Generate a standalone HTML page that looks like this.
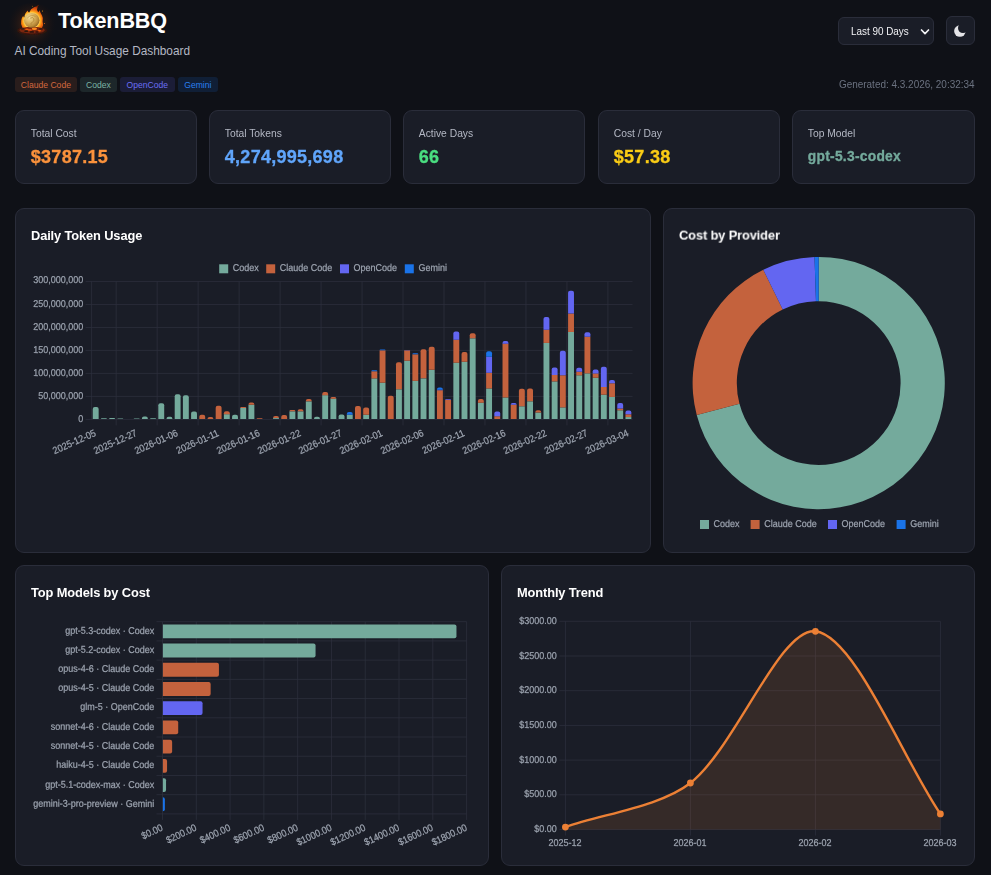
<!DOCTYPE html>
<html lang="en"><head><meta charset="utf-8"><title>TokenBBQ</title>
<style>
*{box-sizing:border-box;margin:0;padding:0}
html,body{width:991px;height:875px;overflow:hidden;background:#0f1117;font-family:"Liberation Sans",sans-serif;color:#e4e4e7}
#main{position:absolute;left:0;top:0;width:991px;height:875px;will-change:transform}
.abs,.card,.logo,h1,.sub,.tag,.gen,.sel,.moon,h2{position:absolute}
h1{left:58px;top:8.6px;font-size:21.6px;font-weight:700;color:#fff;letter-spacing:-.12px;line-height:24px;white-space:nowrap}
.sub{left:14.5px;top:43.5px;font-size:11.85px;color:#b4b8c4;line-height:14px;white-space:nowrap}
.tag{top:77px;height:14.6px;border-radius:3px;font-size:8.6px;line-height:14.6px;text-align:center;white-space:nowrap}
.tag span{position:relative;top:1px}
.gen{right:16.5px;top:77.8px;font-size:10.7px;color:#6b7280;line-height:12px;white-space:nowrap;transform:scaleX(.932);transform-origin:100% 50%}
.sel{left:838px;top:17px;width:96px;height:28px;border:1px solid #2a2d3a;border-radius:6px;background:#1a1d27;color:#f1f1f4;white-space:nowrap}
.sel span{position:absolute;left:12.4px;top:0;font-size:11.3px;line-height:27px;transform:scaleX(.875);transform-origin:0 50%}
.moon{left:946px;top:16px;width:29px;height:29px;border:1px solid #2a2d3a;border-radius:6px;background:#1a1d27}
.card{background:#1a1d27;border:1px solid #2a2d3a;border-radius:9px}
.stat{top:110px;height:74px}
.sl{position:absolute;left:14.8px;top:16px;font-size:10.3px;color:#b4b8c4;line-height:13px;white-space:nowrap}
.sv{position:absolute;left:14.8px;top:35px;font-weight:700;line-height:22px;white-space:nowrap;letter-spacing:.27px;-webkit-text-stroke:.3px currentColor}
h2{font-size:13.1px;font-weight:700;color:#fff;line-height:16px;white-space:nowrap;letter-spacing:-.12px;transform:scale(.98,1.03);transform-origin:0 12.5px}
svg.ch{position:absolute;left:0;top:0}
.g{stroke:#2d303e;stroke-width:.75}
.t{font-family:"Liberation Sans",sans-serif;font-size:9px;fill:#9ca3af;stroke:#9ca3af;stroke-width:.22px}
</style></head><body>

<svg class="logo" width="60" height="46" viewBox="0 0 60 46" style="left:0;top:0">
<defs>
<radialGradient id="glow" cx="32" cy="24" r="24" gradientUnits="userSpaceOnUse"><stop offset="0" stop-color="#6a3010" stop-opacity=".7"/><stop offset=".5" stop-color="#4a2412" stop-opacity=".42"/><stop offset="1" stop-color="#20120e" stop-opacity="0"/></radialGradient>
<radialGradient id="coin" cx="29.5" cy="17.5" r="11" gradientUnits="userSpaceOnUse"><stop offset="0" stop-color="#f3dc9a"/><stop offset=".45" stop-color="#d9b35f"/><stop offset=".8" stop-color="#b98a3a"/><stop offset="1" stop-color="#8f6424"/></radialGradient>
<radialGradient id="fl" cx="31.7" cy="20.5" r="15" gradientUnits="userSpaceOnUse"><stop offset=".48" stop-color="#ffe07a"/><stop offset=".58" stop-color="#ffae1c"/><stop offset=".72" stop-color="#f06a10"/><stop offset=".9" stop-color="#c23c0a"/><stop offset="1" stop-color="#7a2407"/></radialGradient>
<filter id="bl" x="-20%" y="-20%" width="140%" height="140%"><feGaussianBlur stdDeviation=".35"/></filter>
</defs>
<ellipse cx="32" cy="25" rx="26" ry="22" fill="url(#glow)"/>
<g filter="url(#bl)">
<ellipse cx="32.1" cy="30.4" rx="14.8" ry="4.6" fill="#35140b"/>
<path d="M22.5 28Q20.3 24.5 21.2 20.8Q21.4 18 23.2 15.8Q23.4 17.6 24.4 17.4Q24.6 13.2 27.8 10.6Q27.9 12.6 29.2 12.4Q30.6 8.6 34 7.2Q36.6 6.4 38.9 4.7Q37 7.6 37 9.6Q37.4 11.6 38.6 12.2Q39 10.6 39.6 10.2Q40.6 13.2 42 15.4Q43.6 18.2 42.6 21.4Q43.8 24.6 42.2 27.6Q40 30.6 32 30.6Q25 30.6 22.5 28Z" fill="url(#fl)"/>
<ellipse cx="32.1" cy="30.2" rx="12.6" ry="3.4" fill="#7c260b"/>
<ellipse cx="34.4" cy="28.7" rx="2.6" ry="1.3" fill="#ff8a1f"/><ellipse cx="30" cy="29.9" rx="2" ry=".9" fill="#d9480f"/>
<ellipse cx="27" cy="29.4" rx="1.8" ry=".9" fill="#e8590c"/>
<ellipse cx="39.3" cy="30.8" rx="1.7" ry=".8" fill="#e8590c"/>
<ellipse cx="22.5" cy="28.8" rx="2" ry="1" fill="#3a1a12"/>
<ellipse cx="26.2" cy="31.2" rx="2" ry=".9" fill="#2c130d"/>
<ellipse cx="31.8" cy="31.9" rx="2.4" ry=".9" fill="#2c130d"/>
<ellipse cx="41" cy="28.9" rx="2" ry=".9" fill="#3a1a12"/>
<ellipse cx="37" cy="32" rx="1.8" ry=".8" fill="#2c130d"/>
<ellipse cx="31.7" cy="20.3" rx="7.8" ry="7.4" fill="url(#coin)"/>
<path d="M27.2 18.2Q31 13.8 35.6 16.6" fill="none" stroke="#a77a2e" stroke-width=".7" opacity=".7"/>
<path d="M30.2 18.2q2.6-1.6 3.6.6t-1.4 3.4-1.2 2.4" fill="none" stroke="#a77a2e" stroke-width=".9" opacity=".75"/>
</g>
<circle cx="42.4" cy="11" r=".55" fill="#f59e0b"/><circle cx="44.4" cy="23.4" r=".5" fill="#f97316"/><circle cx="32.6" cy="6.2" r=".45" fill="#f59e0b" opacity=".8"/>
</svg>
<h1>TokenBBQ</h1>
<div class="sub">AI Coding Tool Usage Dashboard</div>
<div class="tag" style="left:15.1px;width:61.6px;color:#d2683f;background:rgba(196,98,61,.15)"><span>Claude Code</span></div>
<div class="tag" style="left:80.2px;width:36.6px;color:#7bb4a5;background:rgba(116,170,156,.15)"><span>Codex</span></div>
<div class="tag" style="left:120px;width:54.6px;color:#6a6df5;background:rgba(99,102,241,.15)"><span>OpenCode</span></div>
<div class="tag" style="left:178px;width:39.7px;color:#2a7ff0;background:rgba(26,115,232,.15)"><span>Gemini</span></div>
<div class="sel"><span>Last 90 Days</span><svg width="10" height="8" viewBox="0 0 10 8" style="position:absolute;left:81px;top:9.5px"><path d="M1.5 2l3.5 3.6L8.5 2" fill="none" stroke="#f1f1f4" stroke-width="1.7" stroke-linecap="round" stroke-linejoin="round"/></svg></div>
<div class="moon"><svg width="16" height="16" viewBox="0 0 16 16" style="position:absolute;left:5.2px;top:5.8px"><defs><mask id="mm"><rect width="16" height="16" fill="#000"/><circle cx="7.9" cy="8.1" r="5.75" fill="#fff"/><circle cx="11" cy="5.1" r="5" fill="#000"/></mask></defs><rect width="16" height="16" fill="#e4e4e7" mask="url(#mm)"/></svg></div>
<div class="gen">Generated: 4.3.2026, 20:32:34</div>
<div id="main">
<div class="card stat" style="left:15px;width:182px"><div class="sl">Total Cost</div><div class="sv" style="color:#fb923c;font-size:18px">$3787.15</div></div><div class="card stat" style="left:209px;width:182px"><div class="sl">Total Tokens</div><div class="sv" style="color:#60a5fa;font-size:18px">4,274,995,698</div></div><div class="card stat" style="left:403px;width:182px"><div class="sl">Active Days</div><div class="sv" style="color:#4ade80;font-size:18px">66</div></div><div class="card stat" style="left:598px;width:182px"><div class="sl">Cost / Day</div><div class="sv" style="color:#facc15;font-size:18px">$57.38</div></div><div class="card stat" style="left:792px;width:183px"><div class="sl">Top Model</div><div class="sv" style="color:#74aa9c;font-size:13.8px">gpt-5.3-codex</div></div>
<div class="card" style="left:15px;top:208px;width:636px;height:345px"></div>
<div class="card" style="left:663px;top:208px;width:312px;height:345px"></div>
<div class="card" style="left:15px;top:565px;width:474px;height:301px"></div>
<div class="card" style="left:501px;top:565px;width:474px;height:301px"></div>
<h2 style="left:30.6px;top:227.7px">Daily Token Usage</h2>
<h2 style="left:678.6px;top:227.7px">Cost by Provider</h2>
<h2 style="left:30.6px;top:584.7px">Top Models by Cost</h2>
<h2 style="left:516.6px;top:584.7px">Monthly Trend</h2>
<svg class="ch" width="991" height="875" viewBox="0 0 991 875">
<line x1="85.6" x2="632.5" y1="419.4" y2="419.4" class="g"/>
<text transform="translate(83.35 422) rotate(.1) scale(1 1.1)" text-anchor="end" class="t">0</text>
<line x1="85.6" x2="632.5" y1="396.41" y2="396.41" class="g"/>
<text transform="translate(83.35 399) rotate(.1) scale(1 1.1)" text-anchor="end" class="t">50,000,000</text>
<line x1="85.6" x2="632.5" y1="373.42" y2="373.42" class="g"/>
<text transform="translate(83.35 376) rotate(.1) scale(1 1.1)" text-anchor="end" class="t">100,000,000</text>
<line x1="85.6" x2="632.5" y1="350.42" y2="350.42" class="g"/>
<text transform="translate(83.35 353) rotate(.1) scale(1 1.1)" text-anchor="end" class="t">150,000,000</text>
<line x1="85.6" x2="632.5" y1="327.43" y2="327.43" class="g"/>
<text transform="translate(83.35 330) rotate(.1) scale(1 1.1)" text-anchor="end" class="t">200,000,000</text>
<line x1="85.6" x2="632.5" y1="304.44" y2="304.44" class="g"/>
<text transform="translate(83.35 307) rotate(.1) scale(1 1.1)" text-anchor="end" class="t">250,000,000</text>
<line x1="85.6" x2="632.5" y1="281.45" y2="281.45" class="g"/>
<text transform="translate(83.35 283) rotate(.1) scale(1 1.1)" text-anchor="end" class="t">300,000,000</text>
<line x1="91.6" x2="91.6" y1="281.45" y2="419.4" class="g"/>
<line x1="116.19" x2="116.19" y1="281.45" y2="425.4" class="g"/>
<line x1="157.16" x2="157.16" y1="281.45" y2="425.4" class="g"/>
<line x1="198.14" x2="198.14" y1="281.45" y2="425.4" class="g"/>
<line x1="239.12" x2="239.12" y1="281.45" y2="425.4" class="g"/>
<line x1="280.1" x2="280.1" y1="281.45" y2="425.4" class="g"/>
<line x1="321.07" x2="321.07" y1="281.45" y2="425.4" class="g"/>
<line x1="362.05" x2="362.05" y1="281.45" y2="425.4" class="g"/>
<line x1="403.03" x2="403.03" y1="281.45" y2="425.4" class="g"/>
<line x1="444" x2="444" y1="281.45" y2="425.4" class="g"/>
<line x1="484.98" x2="484.98" y1="281.45" y2="425.4" class="g"/>
<line x1="525.96" x2="525.96" y1="281.45" y2="425.4" class="g"/>
<line x1="566.94" x2="566.94" y1="281.45" y2="425.4" class="g"/>
<line x1="607.91" x2="607.91" y1="281.45" y2="425.4" class="g"/>
<path d="M92.75 419V409.07Q92.75 407.07 94.75 407.07H96.65Q98.65 407.07 98.65 409.07V419Z" fill="#74aa9c"/>
<path d="M100.94 419V419Q100.94 418.33 101.61 418.33H106.18Q106.84 418.33 106.84 419V419Z" fill="#74aa9c"/>
<path d="M109.14 419V419Q109.14 418.1 110.03 418.1H114.14Q115.04 418.1 115.04 419V419Z" fill="#74aa9c"/>
<path d="M117.33 419V419Q117.33 418.43 117.91 418.43H122.66Q123.23 418.43 123.23 419V419Z" fill="#74aa9c"/>
<path d="M133.72 419V419Q133.72 418.43 134.3 418.43H139.05Q139.63 418.43 139.63 419V419Z" fill="#74aa9c"/>
<path d="M141.92 419V418.49Q141.92 416.49 143.92 416.49H145.82Q147.82 416.49 147.82 418.49V419Z" fill="#74aa9c"/>
<path d="M150.12 419V419Q150.12 418.33 150.78 418.33H155.35Q156.02 418.33 156.02 419V419Z" fill="#74aa9c"/>
<path d="M158.31 419V405.25Q158.31 403.25 160.31 403.25H162.21Q164.21 403.25 164.21 405.25V419Z" fill="#74aa9c"/>
<path d="M166.51 419V418.82Q166.51 416.82 168.51 416.82H170.41Q172.41 416.82 172.41 418.82V419Z" fill="#74aa9c"/>
<path d="M174.7 419V396.15Q174.7 394.15 176.7 394.15H178.6Q180.6 394.15 180.6 396.15V419Z" fill="#74aa9c"/>
<path d="M182.9 419V397.16Q182.9 395.16 184.9 395.16H186.8Q188.8 395.16 188.8 397.16V419Z" fill="#74aa9c"/>
<path d="M191.09 419V413.57Q191.09 411.57 193.09 411.57H194.99Q196.99 411.57 196.99 413.57V419Z" fill="#74aa9c"/>
<path d="M199.29 419V416.7Q199.29 414.7 201.29 414.7H203.19Q205.19 414.7 205.19 416.7V419Z" fill="#c4623d"/>
<path d="M207.48 419V418.95Q207.48 416.95 209.48 416.95H211.38Q213.38 416.95 213.38 418.95V419Z" fill="#c4623d"/>
<path d="M215.68 419V407.73Q215.68 405.73 217.68 405.73H219.58Q221.58 405.73 221.58 407.73V419Z" fill="#c4623d"/>
<rect x="223.87" y="414.19" width="5.9" height="4.81" fill="#74aa9c"/>
<path d="M223.87 414.19V413.21Q223.87 411.21 225.87 411.21H227.78Q229.78 411.21 229.78 413.21V414.19Z" fill="#c4623d"/>
<path d="M232.07 419V416.79Q232.07 414.79 234.07 414.79H235.97Q237.97 414.79 237.97 416.79V419Z" fill="#74aa9c"/>
<rect x="240.27" y="407.99" width="5.9" height="11.01" fill="#74aa9c"/>
<path d="M240.27 407.99V407.99Q240.27 407.11 241.14 407.11H245.29Q246.17 407.11 246.17 407.99V407.99Z" fill="#c4623d"/>
<rect x="248.46" y="404.86" width="5.9" height="14.14" fill="#74aa9c"/>
<path d="M248.46 404.86V404.38Q248.46 402.38 250.46 402.38H252.36Q254.36 402.38 254.36 404.38V404.86Z" fill="#c4623d"/>
<path d="M256.66 419V419Q256.66 418.33 257.32 418.33H261.89Q262.56 418.33 262.56 419V419Z" fill="#c4623d"/>
<rect x="273.05" y="418.1" width="5.9" height="0.9" fill="#74aa9c"/>
<path d="M273.05 418.1V418.03Q273.05 416.03 275.05 416.03H276.95Q278.95 416.03 278.95 418.03V418.1Z" fill="#c4623d"/>
<path d="M281.24 419V417.11Q281.24 415.11 283.24 415.11H285.14Q287.14 415.11 287.14 417.11V419Z" fill="#c4623d"/>
<rect x="289.44" y="411.34" width="5.9" height="7.66" fill="#74aa9c"/>
<path d="M289.44 411.34V411.34Q289.44 410.1 290.68 410.1H294.1Q295.34 410.1 295.34 411.34V411.34Z" fill="#c4623d"/>
<rect x="297.63" y="411.34" width="5.9" height="7.66" fill="#74aa9c"/>
<path d="M297.63 411.34V411.34Q297.63 409.37 299.61 409.37H301.56Q303.53 409.37 303.53 411.34V411.34Z" fill="#c4623d"/>
<rect x="305.83" y="401.37" width="5.9" height="17.63" fill="#74aa9c"/>
<path d="M305.83 401.37V401.02Q305.83 399.02 307.83 399.02H309.73Q311.73 399.02 311.73 401.02V401.37Z" fill="#c4623d"/>
<path d="M314.02 419V418.68Q314.02 416.68 316.02 416.68H317.93Q319.93 416.68 319.93 418.68V419Z" fill="#74aa9c"/>
<rect x="322.22" y="395.16" width="5.9" height="23.84" fill="#74aa9c"/>
<path d="M322.22 395.16V394.03Q322.22 392.03 324.22 392.03H326.12Q328.12 392.03 328.12 394.03V395.16Z" fill="#c4623d"/>
<rect x="330.42" y="398.65" width="5.9" height="20.35" fill="#74aa9c"/>
<path d="M330.42 398.65V398.65Q330.42 397.04 332.02 397.04H334.71Q336.32 397.04 336.32 398.65V398.65Z" fill="#c4623d"/>
<path d="M338.61 419V416.42Q338.61 414.42 340.61 414.42H342.51Q344.51 414.42 344.51 416.42V419Z" fill="#74aa9c"/>
<rect x="346.81" y="414.79" width="5.9" height="4.21" fill="#74aa9c"/>
<path d="M346.81 414.79V413.94Q346.81 411.94 348.81 411.94H350.71Q352.71 411.94 352.71 413.94V414.79Z" fill="#1a73e8"/>
<path d="M355 419V408.1Q355 406.1 357 406.1H358.9Q360.9 406.1 360.9 408.1V419Z" fill="#c4623d"/>
<rect x="363.2" y="414.79" width="5.9" height="4.21" fill="#74aa9c"/>
<path d="M363.2 414.79V409.57Q363.2 407.57 365.2 407.57H367.1Q369.1 407.57 369.1 409.57V414.79Z" fill="#c4623d"/>
<rect x="371.39" y="378.37" width="5.9" height="40.63" fill="#74aa9c"/>
<rect x="371.39" y="371.29" width="5.9" height="7.08" fill="#c4623d"/>
<path d="M371.39 371.29V371.29Q371.39 370.28 372.4 370.28H376.28Q377.29 370.28 377.29 371.29V371.29Z" fill="#1a73e8"/>
<rect x="379.59" y="382.7" width="5.9" height="36.3" fill="#74aa9c"/>
<rect x="379.59" y="350.37" width="5.9" height="32.33" fill="#c4623d"/>
<path d="M379.59 350.37V350.37Q379.59 349.5 380.46 349.5H384.62Q385.49 349.5 385.49 350.37V350.37Z" fill="#1a73e8"/>
<path d="M387.78 419V397.8Q387.78 395.8 389.78 395.8H391.68Q393.68 395.8 393.68 397.8V419Z" fill="#c4623d"/>
<rect x="395.98" y="389.32" width="5.9" height="29.68" fill="#74aa9c"/>
<path d="M395.98 389.32V364.19Q395.98 362.19 397.98 362.19H399.88Q401.88 362.19 401.88 364.19V389.32Z" fill="#c4623d"/>
<rect x="404.17" y="360.72" width="5.9" height="58.28" fill="#74aa9c"/>
<rect x="404.17" y="350.37" width="5.9" height="10.35" fill="#c4623d"/>
<path d="M404.17 350.37V350.37Q404.17 350.09 404.45 350.09H409.8Q410.08 350.09 410.08 350.37V350.37Z" fill="#6366f1"/>
<rect x="412.37" y="380.86" width="5.9" height="38.14" fill="#74aa9c"/>
<rect x="412.37" y="354.37" width="5.9" height="26.49" fill="#c4623d"/>
<path d="M412.37 354.37V354.37Q412.37 353.27 413.47 353.27H417.17Q418.27 353.27 418.27 354.37V354.37Z" fill="#1a73e8"/>
<rect x="420.57" y="378.37" width="5.9" height="40.63" fill="#74aa9c"/>
<path d="M420.57 378.37V351.13Q420.57 349.13 422.57 349.13H424.47Q426.47 349.13 426.47 351.13V378.37Z" fill="#c4623d"/>
<rect x="428.76" y="369.82" width="5.9" height="49.18" fill="#74aa9c"/>
<path d="M428.76 369.82V348.65Q428.76 346.65 430.76 346.65H432.66Q434.66 346.65 434.66 348.65V369.82Z" fill="#c4623d"/>
<rect x="436.96" y="390.24" width="5.9" height="28.76" fill="#c4623d"/>
<rect x="436.96" y="389.78" width="5.9" height="0.46" fill="#6366f1"/>
<path d="M436.96 389.78V389.48Q436.96 387.48 438.96 387.48H440.86Q442.86 387.48 442.86 389.48V389.78Z" fill="#1a73e8"/>
<rect x="445.15" y="399.85" width="5.9" height="19.15" fill="#c4623d"/>
<path d="M445.15 399.85V399.85Q445.15 398.93 446.07 398.93H450.13Q451.05 398.93 451.05 399.85V399.85Z" fill="#6366f1"/>
<rect x="453.35" y="362.69" width="5.9" height="56.31" fill="#74aa9c"/>
<rect x="453.35" y="339.7" width="5.9" height="22.99" fill="#c4623d"/>
<path d="M453.35 339.7V333.42Q453.35 331.42 455.35 331.42H457.25Q459.25 331.42 459.25 333.42V339.7Z" fill="#6366f1"/>
<rect x="461.54" y="361.77" width="5.9" height="57.23" fill="#74aa9c"/>
<path d="M461.54 361.77V354.12Q461.54 352.12 463.54 352.12H465.44Q467.44 352.12 467.44 354.12V361.77Z" fill="#c4623d"/>
<rect x="469.74" y="338.32" width="5.9" height="80.68" fill="#74aa9c"/>
<path d="M469.74 338.32V335.26Q469.74 333.26 471.74 333.26H473.64Q475.64 333.26 475.64 335.26V338.32Z" fill="#c4623d"/>
<rect x="477.93" y="402.7" width="5.9" height="16.3" fill="#74aa9c"/>
<path d="M477.93 402.7V401.02Q477.93 399.02 479.93 399.02H481.83Q483.83 399.02 483.83 401.02V402.7Z" fill="#c4623d"/>
<rect x="486.13" y="388.44" width="5.9" height="30.56" fill="#74aa9c"/>
<rect x="486.13" y="372.81" width="5.9" height="15.63" fill="#c4623d"/>
<rect x="486.13" y="356.72" width="5.9" height="16.09" fill="#6366f1"/>
<path d="M486.13 356.72V353.2Q486.13 351.2 488.13 351.2H490.03Q492.03 351.2 492.03 353.2V356.72Z" fill="#1a73e8"/>
<rect x="494.32" y="416.22" width="5.9" height="2.78" fill="#c4623d"/>
<path d="M494.32 416.22V413.39Q494.32 411.39 496.32 411.39H498.23Q500.23 411.39 500.23 413.39V416.22Z" fill="#6366f1"/>
<rect x="502.52" y="397.46" width="5.9" height="21.54" fill="#74aa9c"/>
<rect x="502.52" y="343.66" width="5.9" height="53.8" fill="#c4623d"/>
<path d="M502.52 343.66V343.08Q502.52 341.08 504.52 341.08H506.42Q508.42 341.08 508.42 343.08V343.66Z" fill="#6366f1"/>
<rect x="510.72" y="404.68" width="5.9" height="14.32" fill="#c4623d"/>
<path d="M510.72 404.68V404.68Q510.72 403.07 512.32 403.07H515.01Q516.62 403.07 516.62 404.68V404.68Z" fill="#6366f1"/>
<rect x="518.91" y="406.29" width="5.9" height="12.71" fill="#74aa9c"/>
<path d="M518.91 406.29V390.63Q518.91 388.63 520.91 388.63H522.81Q524.81 388.63 524.81 390.63V406.29Z" fill="#c4623d"/>
<rect x="527.11" y="401.32" width="5.9" height="17.68" fill="#74aa9c"/>
<path d="M527.11 401.32V390.44Q527.11 388.44 529.11 388.44H531.01Q533.01 388.44 533.01 390.44V401.32Z" fill="#c4623d"/>
<rect x="535.3" y="412.54" width="5.9" height="6.46" fill="#74aa9c"/>
<path d="M535.3 412.54V412.15Q535.3 410.15 537.3 410.15H539.2Q541.2 410.15 541.2 412.15V412.54Z" fill="#c4623d"/>
<rect x="543.5" y="342.92" width="5.9" height="76.08" fill="#74aa9c"/>
<rect x="543.5" y="329.77" width="5.9" height="13.15" fill="#c4623d"/>
<path d="M543.5 329.77V318.89Q543.5 316.89 545.5 316.89H547.4Q549.4 316.89 549.4 318.89V329.77Z" fill="#6366f1"/>
<rect x="551.69" y="381.41" width="5.9" height="37.59" fill="#74aa9c"/>
<rect x="551.69" y="374.97" width="5.9" height="6.44" fill="#c4623d"/>
<path d="M551.69 374.97V369.61Q551.69 367.61 553.69 367.61H555.59Q557.59 367.61 557.59 369.61V374.97Z" fill="#6366f1"/>
<rect x="559.89" y="407.39" width="5.9" height="11.61" fill="#74aa9c"/>
<rect x="559.89" y="375.29" width="5.9" height="32.1" fill="#c4623d"/>
<path d="M559.89 375.29V352.74Q559.89 350.74 561.89 350.74H563.79Q565.79 350.74 565.79 352.74V375.29Z" fill="#6366f1"/>
<rect x="568.08" y="331.98" width="5.9" height="87.02" fill="#74aa9c"/>
<rect x="568.08" y="313.54" width="5.9" height="18.44" fill="#c4623d"/>
<path d="M568.08 313.54V292.73Q568.08 290.73 570.08 290.73H571.98Q573.98 290.73 573.98 292.73V313.54Z" fill="#6366f1"/>
<rect x="576.28" y="375.29" width="5.9" height="43.71" fill="#74aa9c"/>
<rect x="576.28" y="371.75" width="5.9" height="3.54" fill="#c4623d"/>
<path d="M576.28 371.75V369.75Q576.28 367.75 578.28 367.75H580.18Q582.18 367.75 582.18 369.75V371.75Z" fill="#6366f1"/>
<rect x="584.47" y="373.36" width="5.9" height="45.64" fill="#74aa9c"/>
<rect x="584.47" y="336.76" width="5.9" height="36.6" fill="#c4623d"/>
<path d="M584.47 336.76V334.25Q584.47 332.25 586.47 332.25H588.38Q590.38 332.25 590.38 334.25V336.76Z" fill="#6366f1"/>
<rect x="592.67" y="377.73" width="5.9" height="41.27" fill="#74aa9c"/>
<rect x="592.67" y="373.41" width="5.9" height="4.32" fill="#c4623d"/>
<path d="M592.67 373.41V371.41Q592.67 369.41 594.67 369.41H596.57Q598.57 369.41 598.57 371.41V373.41Z" fill="#6366f1"/>
<rect x="600.87" y="394.7" width="5.9" height="24.3" fill="#74aa9c"/>
<rect x="600.87" y="386.97" width="5.9" height="7.73" fill="#c4623d"/>
<path d="M600.87 386.97V368.74Q600.87 366.74 602.87 366.74H604.77Q606.77 366.74 606.77 368.74V386.97Z" fill="#6366f1"/>
<rect x="609.06" y="396.95" width="5.9" height="22.05" fill="#74aa9c"/>
<rect x="609.06" y="383.29" width="5.9" height="13.66" fill="#c4623d"/>
<path d="M609.06 383.29V382.08Q609.06 380.08 611.06 380.08H612.96Q614.96 380.08 614.96 382.08V383.29Z" fill="#6366f1"/>
<rect x="617.26" y="410.29" width="5.9" height="8.71" fill="#74aa9c"/>
<rect x="617.26" y="408.54" width="5.9" height="1.75" fill="#c4623d"/>
<path d="M617.26 408.54V405.07Q617.26 403.07 619.26 403.07H621.16Q623.16 403.07 623.16 405.07V408.54Z" fill="#6366f1"/>
<rect x="625.45" y="417.05" width="5.9" height="1.95" fill="#74aa9c"/>
<rect x="625.45" y="414.33" width="5.9" height="2.71" fill="#c4623d"/>
<path d="M625.45 414.33V412.47Q625.45 410.47 627.45 410.47H629.35Q631.35 410.47 631.35 412.47V414.33Z" fill="#6366f1"/>
<text transform="translate(96.6 435.5) rotate(-24) scale(1 1.1)" text-anchor="end" class="t">2025-12-05</text>
<text transform="translate(137.58 435.5) rotate(-24) scale(1 1.1)" text-anchor="end" class="t">2025-12-27</text>
<text transform="translate(178.55 435.5) rotate(-24) scale(1 1.1)" text-anchor="end" class="t">2026-01-06</text>
<text transform="translate(219.53 435.5) rotate(-24) scale(1 1.1)" text-anchor="end" class="t">2026-01-11</text>
<text transform="translate(260.51 435.5) rotate(-24) scale(1 1.1)" text-anchor="end" class="t">2026-01-16</text>
<text transform="translate(301.48 435.5) rotate(-24) scale(1 1.1)" text-anchor="end" class="t">2026-01-22</text>
<text transform="translate(342.46 435.5) rotate(-24) scale(1 1.1)" text-anchor="end" class="t">2026-01-27</text>
<text transform="translate(383.44 435.5) rotate(-24) scale(1 1.1)" text-anchor="end" class="t">2026-02-01</text>
<text transform="translate(424.42 435.5) rotate(-24) scale(1 1.1)" text-anchor="end" class="t">2026-02-06</text>
<text transform="translate(465.39 435.5) rotate(-24) scale(1 1.1)" text-anchor="end" class="t">2026-02-11</text>
<text transform="translate(506.37 435.5) rotate(-24) scale(1 1.1)" text-anchor="end" class="t">2026-02-16</text>
<text transform="translate(547.35 435.5) rotate(-24) scale(1 1.1)" text-anchor="end" class="t">2026-02-22</text>
<text transform="translate(588.32 435.5) rotate(-24) scale(1 1.1)" text-anchor="end" class="t">2026-02-27</text>
<text transform="translate(629.3 435.5) rotate(-24) scale(1 1.1)" text-anchor="end" class="t">2026-03-04</text>
<rect x="219.2" y="264.3" width="9" height="9" fill="#74aa9c"/>
<text transform="translate(232.8 271) rotate(.1) scale(1 1.1)" class="t">Codex</text>
<rect x="266.2" y="264.3" width="9" height="9" fill="#c4623d"/>
<text transform="translate(279.8 271) rotate(.1) scale(1 1.1)" class="t">Claude Code</text>
<rect x="340" y="264.3" width="9" height="9" fill="#6366f1"/>
<text transform="translate(353.6 271) rotate(.1) scale(1 1.1)" class="t">OpenCode</text>
<rect x="404.8" y="264.3" width="9" height="9" fill="#1a73e8"/>
<text transform="translate(418.4 271) rotate(.1) scale(1 1.1)" class="t">Gemini</text>
<path d="M818.7 256.95A126.1 126.1 0 1 1 696.73 415.05L739.48 403.83A81.9 81.9 0 1 0 818.7 301.15Z" fill="#74aa9c"/>
<path d="M696.73 415.05A126.1 126.1 0 0 1 763.3 269.77L782.72 309.48A81.9 81.9 0 0 0 739.48 403.83Z" fill="#c4623d"/>
<path d="M763.3 269.77A126.1 126.1 0 0 1 814.52 257.02L815.98 301.2A81.9 81.9 0 0 0 782.72 309.48Z" fill="#6366f1"/>
<path d="M814.52 257.02A126.1 126.1 0 0 1 818.7 256.95L818.7 301.15A81.9 81.9 0 0 0 815.98 301.2Z" fill="#1a73e8"/>
<rect x="700" y="520" width="9" height="9" fill="#74aa9c"/>
<text transform="translate(713.6 527) rotate(.1) scale(1 1.1)" class="t">Codex</text>
<rect x="750.6" y="520" width="9" height="9" fill="#c4623d"/>
<text transform="translate(764.2 527) rotate(.1) scale(1 1.1)" class="t">Claude Code</text>
<rect x="828" y="520" width="9" height="9" fill="#6366f1"/>
<text transform="translate(841.6 527) rotate(.1) scale(1 1.1)" class="t">OpenCode</text>
<rect x="896.6" y="520" width="9" height="9" fill="#1a73e8"/>
<text transform="translate(910.2 527) rotate(.1) scale(1 1.1)" class="t">Gemini</text>
<line x1="156.5" x2="466.6" y1="621.7" y2="621.7" class="g"/>
<line x1="156.5" x2="466.6" y1="640.92" y2="640.92" class="g"/>
<line x1="156.5" x2="466.6" y1="660.14" y2="660.14" class="g"/>
<line x1="156.5" x2="466.6" y1="679.36" y2="679.36" class="g"/>
<line x1="156.5" x2="466.6" y1="698.58" y2="698.58" class="g"/>
<line x1="156.5" x2="466.6" y1="717.8" y2="717.8" class="g"/>
<line x1="156.5" x2="466.6" y1="737.02" y2="737.02" class="g"/>
<line x1="156.5" x2="466.6" y1="756.24" y2="756.24" class="g"/>
<line x1="156.5" x2="466.6" y1="775.46" y2="775.46" class="g"/>
<line x1="156.5" x2="466.6" y1="794.68" y2="794.68" class="g"/>
<line x1="156.5" x2="466.6" y1="813.9" y2="813.9" class="g"/>
<line x1="162.5" x2="162.5" y1="621.7" y2="819.9" class="g"/>
<text transform="translate(163.6 829.9) rotate(-25) scale(1 1.1)" text-anchor="end" class="t">$0.00</text>
<line x1="196.29" x2="196.29" y1="621.7" y2="819.9" class="g"/>
<text transform="translate(197.39 829.9) rotate(-25) scale(1 1.1)" text-anchor="end" class="t">$200.00</text>
<line x1="230.08" x2="230.08" y1="621.7" y2="819.9" class="g"/>
<text transform="translate(231.18 829.9) rotate(-25) scale(1 1.1)" text-anchor="end" class="t">$400.00</text>
<line x1="263.87" x2="263.87" y1="621.7" y2="819.9" class="g"/>
<text transform="translate(264.97 829.9) rotate(-25) scale(1 1.1)" text-anchor="end" class="t">$600.00</text>
<line x1="297.66" x2="297.66" y1="621.7" y2="819.9" class="g"/>
<text transform="translate(298.76 829.9) rotate(-25) scale(1 1.1)" text-anchor="end" class="t">$800.00</text>
<line x1="331.44" x2="331.44" y1="621.7" y2="819.9" class="g"/>
<text transform="translate(332.54 829.9) rotate(-25) scale(1 1.1)" text-anchor="end" class="t">$1000.00</text>
<line x1="365.23" x2="365.23" y1="621.7" y2="819.9" class="g"/>
<text transform="translate(366.33 829.9) rotate(-25) scale(1 1.1)" text-anchor="end" class="t">$1200.00</text>
<line x1="399.02" x2="399.02" y1="621.7" y2="819.9" class="g"/>
<text transform="translate(400.12 829.9) rotate(-25) scale(1 1.1)" text-anchor="end" class="t">$1400.00</text>
<line x1="432.81" x2="432.81" y1="621.7" y2="819.9" class="g"/>
<text transform="translate(433.91 829.9) rotate(-25) scale(1 1.1)" text-anchor="end" class="t">$1600.00</text>
<line x1="466.6" x2="466.6" y1="621.7" y2="819.9" class="g"/>
<text transform="translate(467.7 829.9) rotate(-25) scale(1 1.1)" text-anchor="end" class="t">$1800.00</text>
<path d="M162.9 624.39H454.46Q456.46 624.39 456.46 626.39V636.23Q456.46 638.23 454.46 638.23H162.9Z" fill="#74aa9c"/>
<text transform="translate(154.25 634) rotate(.1) scale(1 1.1)" text-anchor="end" class="t">gpt-5.3-codex · Codex</text>
<path d="M162.9 643.61H313.56Q315.56 643.61 315.56 645.61V655.45Q315.56 657.45 313.56 657.45H162.9Z" fill="#74aa9c"/>
<text transform="translate(154.25 653) rotate(.1) scale(1 1.1)" text-anchor="end" class="t">gpt-5.2-codex · Codex</text>
<path d="M162.9 662.83H216.93Q218.93 662.83 218.93 664.83V674.67Q218.93 676.67 216.93 676.67H162.9Z" fill="#c4623d"/>
<text transform="translate(154.25 672) rotate(.1) scale(1 1.1)" text-anchor="end" class="t">opus-4-6 · Claude Code</text>
<path d="M162.9 682.05H208.65Q210.65 682.05 210.65 684.05V693.89Q210.65 695.89 208.65 695.89H162.9Z" fill="#c4623d"/>
<text transform="translate(154.25 691) rotate(.1) scale(1 1.1)" text-anchor="end" class="t">opus-4-5 · Claude Code</text>
<path d="M162.9 701.27H200.54Q202.54 701.27 202.54 703.27V713.11Q202.54 715.11 200.54 715.11H162.9Z" fill="#6366f1"/>
<text transform="translate(154.25 710) rotate(.1) scale(1 1.1)" text-anchor="end" class="t">glm-5 · OpenCode</text>
<path d="M162.9 720.49H176.21Q178.21 720.49 178.21 722.49V732.33Q178.21 734.33 176.21 734.33H162.9Z" fill="#c4623d"/>
<text transform="translate(154.25 730) rotate(.1) scale(1 1.1)" text-anchor="end" class="t">sonnet-4-6 · Claude Code</text>
<path d="M162.9 739.71H170.13Q172.13 739.71 172.13 741.71V751.55Q172.13 753.55 170.13 753.55H162.9Z" fill="#c4623d"/>
<text transform="translate(154.25 749) rotate(.1) scale(1 1.1)" text-anchor="end" class="t">sonnet-4-5 · Claude Code</text>
<path d="M162.9 758.93H165.06Q167.06 758.93 167.06 760.93V770.77Q167.06 772.77 165.06 772.77H162.9Z" fill="#c4623d"/>
<text transform="translate(154.25 768) rotate(.1) scale(1 1.1)" text-anchor="end" class="t">haiku-4-5 · Claude Code</text>
<path d="M162.9 778.15H164.05Q166.05 778.15 166.05 780.15V789.99Q166.05 791.99 164.05 791.99H162.9Z" fill="#74aa9c"/>
<text transform="translate(154.25 788) rotate(.1) scale(1 1.1)" text-anchor="end" class="t">gpt-5.1-codex-max · Codex</text>
<path d="M162.9 797.37H162.9Q164.87 797.37 164.87 799.34V809.24Q164.87 811.21 162.9 811.21H162.9Z" fill="#1a73e8"/>
<text transform="translate(154.25 807) rotate(.1) scale(1 1.1)" text-anchor="end" class="t">gemini-3-pro-preview · Gemini</text>
<line x1="559.4" x2="940.4" y1="829.5" y2="829.5" class="g"/>
<text transform="translate(556.75 832) rotate(.1) scale(1 1.1)" text-anchor="end" class="t">$0.00</text>
<line x1="559.4" x2="940.4" y1="794.8" y2="794.8" class="g"/>
<text transform="translate(556.75 797) rotate(.1) scale(1 1.1)" text-anchor="end" class="t">$500.00</text>
<line x1="559.4" x2="940.4" y1="760.1" y2="760.1" class="g"/>
<text transform="translate(556.75 763) rotate(.1) scale(1 1.1)" text-anchor="end" class="t">$1000.00</text>
<line x1="559.4" x2="940.4" y1="725.4" y2="725.4" class="g"/>
<text transform="translate(556.75 728) rotate(.1) scale(1 1.1)" text-anchor="end" class="t">$1500.00</text>
<line x1="559.4" x2="940.4" y1="690.7" y2="690.7" class="g"/>
<text transform="translate(556.75 693) rotate(.1) scale(1 1.1)" text-anchor="end" class="t">$2000.00</text>
<line x1="559.4" x2="940.4" y1="656" y2="656" class="g"/>
<text transform="translate(556.75 659) rotate(.1) scale(1 1.1)" text-anchor="end" class="t">$2500.00</text>
<line x1="559.4" x2="940.4" y1="621.3" y2="621.3" class="g"/>
<text transform="translate(556.75 624) rotate(.1) scale(1 1.1)" text-anchor="end" class="t">$3000.00</text>
<line x1="565.4" x2="565.4" y1="621.3" y2="835.5" class="g"/>
<text transform="translate(565 846) rotate(.1) scale(1 1.1)" text-anchor="middle" class="t">2025-12</text>
<line x1="690.4" x2="690.4" y1="621.3" y2="835.5" class="g"/>
<text transform="translate(690 846) rotate(.1) scale(1 1.1)" text-anchor="middle" class="t">2026-01</text>
<line x1="815.4" x2="815.4" y1="621.3" y2="835.5" class="g"/>
<text transform="translate(815 846) rotate(.1) scale(1 1.1)" text-anchor="middle" class="t">2026-02</text>
<line x1="940.4" x2="940.4" y1="621.3" y2="835.5" class="g"/>
<text transform="translate(940 846) rotate(.1) scale(1 1.1)" text-anchor="middle" class="t">2026-03</text>
<path d="M565.4 827.07C602.9 813.85 660.2 806.66 690.4 783C735.2 747.92 780.12 626.93 815.4 631.29C855.12 636.21 902.9 759.16 940.4 813.95L940.4 829.5L565.4 829.5Z" fill="#ec8035" fill-opacity="0.135"/>
<path d="M565.4 827.07C602.9 813.85 660.2 806.66 690.4 783C735.2 747.92 780.12 626.93 815.4 631.29C855.12 636.21 902.9 759.16 940.4 813.95" fill="none" stroke="#ec8035" stroke-width="2.4"/>
<circle cx="565.4" cy="827.07" r="3.4" fill="#ec8035"/>
<circle cx="690.4" cy="783" r="3.4" fill="#ec8035"/>
<circle cx="815.4" cy="631.29" r="3.4" fill="#ec8035"/>
<circle cx="940.4" cy="813.95" r="3.4" fill="#ec8035"/>
</svg>
</div>
</body></html>
